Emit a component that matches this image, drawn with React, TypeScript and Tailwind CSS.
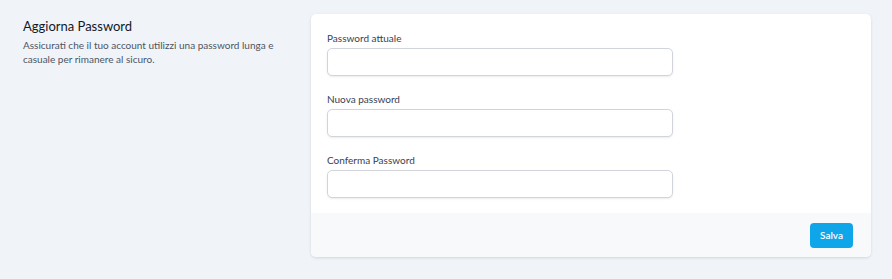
export default function App() {
  const field = (label: string) => (
    <div className="flex flex-col">
      <label className="text-[10px] leading-[14px] text-[#374151]">{label}</label>
      <input
        type="password"
        className="mt-[3px] h-[28px] w-[346px] rounded-[5px] border border-[#d1d5db] bg-white shadow-[0_1px_2px_rgba(0,0,0,0.08)] outline-none"
      />
    </div>
  );
  return (
    <div className="w-[892px] h-[279px] bg-[#f0f3f8] flex" style={{ fontFamily: 'Lato, "Noto Sans", sans-serif' }}>
      <div className="w-[311px] pl-[23px] pt-[16px]">
        <h3 className="text-[13px] leading-[20px] text-[#111827]">Aggiorna Password</h3>
        <p className="mt-[3px] text-[10px] leading-[13.5px] text-[#4b5563] pr-[20px]">
          Assicurati che il tuo account utilizzi una password lunga e casuale per rimanere al sicuro.
        </p>
      </div>
      <div className="mt-[14px] w-[560px] h-[243px] flex flex-col rounded-[5px] bg-white shadow-[0_1px_3px_rgba(0,0,0,0.12)] overflow-hidden">
        <div className="flex flex-col gap-[16px] px-[16px] pt-[17px] pb-[15px] h-[199px]">
          {field("Password attuale")}
          {field("Nuova password")}
          {field("Conferma Password")}
        </div>
        <div className="flex-1 bg-[#f8f9fb] flex items-center justify-end pr-[18px]">
          <button className="h-[25px] w-[43px] rounded-[4px] bg-[#0ea5e9] text-white text-[10px] font-semibold">Salva</button>
        </div>
      </div>
    </div>
  );
}
